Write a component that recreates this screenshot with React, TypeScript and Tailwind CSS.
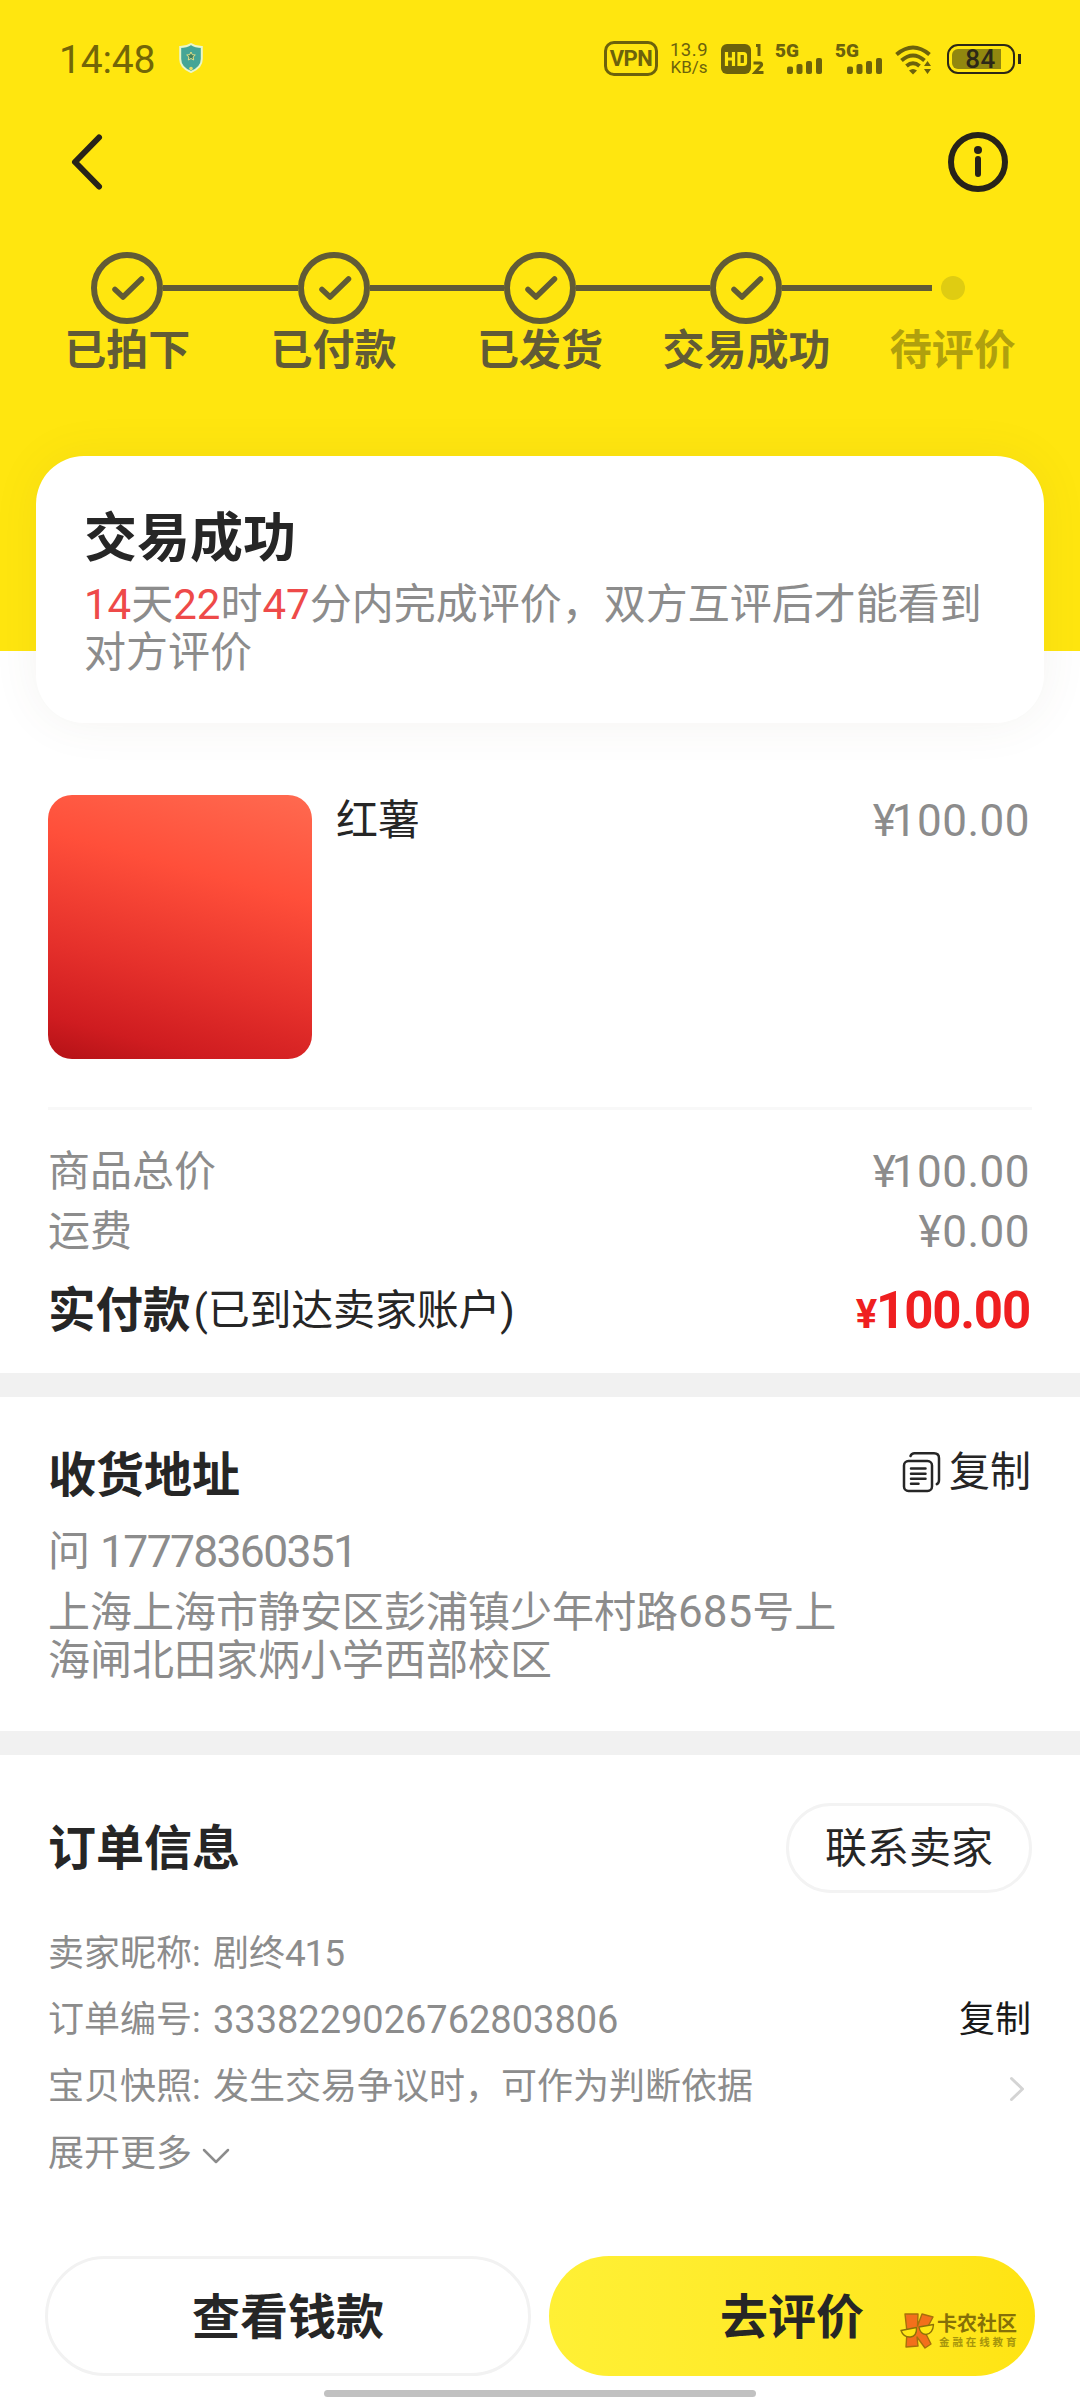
import React from "react";

const FONT = "font-['Roboto','Noto_Sans_CJK_SC',sans-serif]";

function Shield() {
  return (
    <svg className="ml-[22px] h-[30px] w-[24px]" viewBox="0 0 24 30">
      <path
        d="M12 1C9 3 5 4 1.200 4v12c0 6 4.500 10.500 10.800 13 6.300-2.500 10.800-7 10.800-13V4C19 4 15 3 12 1Z"
        fill="#45a596"
        stroke="#e9f6c9"
        strokeWidth="2"
      />
      <path d="m12 9 1.300 2.700 3 .3-2.200 2 .6 3-2.700-1.500L9.300 17l.6-3-2.200-2 3-.3Z" fill="#3f8060" stroke="#e0e08a" strokeWidth="1" />
      <circle cx="12" cy="25.500" r="1.800" fill="#e5dd6a" />
    </svg>
  );
}

function Signal() {
  return (
    <div className="h-[32px] w-[48px]">
      <div className="h-[15px] text-[19px] font-black leading-[16px] text-[#6c620c]">5G</div>
      <svg className="ml-[12px] h-[17px] w-[36px]" viewBox="12 15 36 17" fill="#6c620c">
        <rect x="12" y="23.500" width="6" height="7.500" rx="2" />
        <rect x="21.500" y="21" width="6" height="10" rx="2" />
        <rect x="31" y="18" width="6" height="13" rx="2" />
        <rect x="41" y="15" width="6" height="16" rx="2" />
      </svg>
    </div>
  );
}

function StatusBar() {
  return (
    <div className="flex h-[116px] items-center pl-[59px] pr-[59px]">
      <span className="w-[98px] pt-[4px] text-[39px] leading-[48px] tracking-[-0.200px] text-[#736607]">14:48</span>
      <Shield />
      <div className="ml-auto flex items-center pt-[1px]">
        <div className="flex h-[35px] w-[54px] items-center justify-center rounded-[10px] border-[3px] border-[#6c620c] text-[22px] font-bold tracking-[-0.500px] text-[#6c620c]">
          VPN
        </div>
        <div className="ml-[12px] flex w-[38px] flex-col items-center text-[18.500px] leading-[17px] text-[#6c620c]">
          <span className="tracking-[0.500px]">13.9</span>
          <span className="text-[17px]">KB/s</span>
        </div>
        <svg className="ml-[13px] h-[32px] w-[43px]" viewBox="0 0 43 32" fill="#6c620c">
          <rect x="0" y="1" width="30" height="30" rx="6" />
          <path d="M5.500 9v14M12.500 9v14M5.500 16h7" fill="none" stroke="#ffe60f" strokeWidth="3.200" />
          <path d="M18 10.500h4.500a2 2 0 0 1 2 2v7a2 2 0 0 1-2 2H18Z" fill="none" stroke="#ffe60f" strokeWidth="3.200" />
          <path d="M35 2.500h3V13" fill="none" stroke="#6c620c" strokeWidth="3" />
          <path d="M32.500 20h6.500q2 0 1.500 2.200L34 29.500h8.500" fill="none" stroke="#6c620c" strokeWidth="3" />
        </svg>
        <div className="ml-[11px] flex gap-[12px]">
          <Signal />
          <Signal />
        </div>
        <svg className="ml-[12px] h-[32px] w-[38px]" viewBox="0 0 38 32" fill="none" stroke="#6c620c" strokeWidth="4">
          <path d="M1.500 11.500Q18 -2.500 34.500 11.500" />
          <path d="M6.500 17.500Q18 7.500 29.500 17.500" />
          <path d="M11.500 23Q18 17.500 24.500 23" />
          <path d="M14 27.500q4-3 8 0l-4 4Z" fill="#6c620c" stroke="none" />
          <path d="m32.500 18 3.500 5h-7ZM32.500 31l3.500-5h-7Z" fill="#6c620c" stroke="none" />
        </svg>
        <div className="ml-[14px] flex h-[30px] w-[68px] items-center rounded-[11px] border-[2.500px] border-[#2c2817] p-[3px]">
          <div className="flex h-[20px] w-[49px] items-center justify-center rounded-l-[6px] bg-[#91870f]">
            <span className="ml-[8px] text-[26px] font-medium leading-[20px] tracking-[0.500px] text-[#2c2817]">84</span>
          </div>
        </div>
        <div className="ml-[3px] h-[10px] w-[3px] bg-[#2c2817]" />
      </div>
    </div>
  );
}

function NavBar() {
  return (
    <div className="flex h-[92px] items-center justify-between pl-[66px] pr-[72px]">
      <svg className="h-[60px] w-[42px]" viewBox="0 0 42 60" fill="none" stroke="#272319" strokeWidth="6" strokeLinecap="round" strokeLinejoin="round">
        <path d="M33 5.500 9 30 33 54.500" />
      </svg>
      <svg className="h-[60px] w-[60px]" viewBox="0 0 60 60" fill="none" stroke="#272319" strokeWidth="6">
        <circle cx="30" cy="30" r="27" />
        <circle cx="30" cy="18" r="4" fill="#272319" stroke="none" />
        <path d="M30 27v15" strokeLinecap="round" />
      </svg>
    </div>
  );
}

const steps = ["已拍下", "已付款", "已发货", "交易成功"];

function Steps() {
  return (
    <div className="mx-[24px] mt-[44px] grid grid-cols-5">
      {steps.map((label, i) => (
        <div key={label} className="flex flex-col items-center">
          <div className="flex h-[72px] w-full items-center">
            <div className={i === 0 ? "h-[6px] flex-1" : "h-[6px] flex-1 bg-[#615b36]"} />
            <svg className="h-[72px] w-[72px]" viewBox="0 0 72 72" fill="none" stroke="#615b36" strokeWidth="6">
              <circle cx="36" cy="36" r="33" />
              <path d="m24 37.500 8 7.500 18.500-18" strokeWidth="5.500" strokeLinecap="round" strokeLinejoin="round" />
            </svg>
            <div className="h-[6px] flex-1 bg-[#615b36]" />
          </div>
          <span className="text-[42px] font-bold leading-[53px] text-[#615b36]">{label}</span>
        </div>
      ))}
      <div className="flex flex-col items-center">
        <div className="flex h-[72px] w-full items-center">
          <div className="h-[6px] w-[82px] bg-[#615b36]" />
          <div className="ml-[9px] h-[24px] w-[24px] rounded-full bg-[#dfcc12]" />
        </div>
        <span className="text-[42px] font-bold leading-[53px] text-[#b0a00d]">待评价</span>
      </div>
    </div>
  );
}

function Price({ value }: { value: string }) {
  return (
    <span className="text-[44px] tracking-[0.500px] text-[#8c8c8c]">
      <span className={value.startsWith("1") ? "tracking-[-4px]" : "tracking-[0.500px]"}>¥</span>
      {value}
    </span>
  );
}

function Row({ label, value }: { label: string; value: string }) {
  return (
    <div className="flex h-[60px] items-center justify-between">
      <span className="text-[42px] text-[#8c8c8c]">{label}</span>
      <Price value={value} />
    </div>
  );
}

function CommunityMark() {
  return (
    <div className="absolute right-[18px] top-[56px] flex">
      <svg className="h-[38px] w-[36px]" viewBox="0 0 36 38" stroke="#a8700a" strokeWidth="1.400" strokeLinejoin="round">
        <path d="M6 2h13l-.500 12L23 2l11 3-8 15 6 12-6 4-8-11 1 9-12 1L8 20Z" fill="#f3701b" />
        <path d="M2 18.500 17.500 15.500Q18 24 11.500 25 4.500 25.500 2 18.500ZM20 15l14.500-2.500Q34 21.500 27 22.500 21 22 20 15Z" fill="#ffe714" stroke="#8d7208" />
      </svg>
      <div className="ml-[2px] mt-[2px] w-[80px]">
        <div className="text-[20px] font-bold leading-[20px] text-[#857008]">卡农社区</div>
        <div className="mt-[3px] whitespace-nowrap pl-[2px] text-[10.500px] leading-[11px] tracking-[2.900px] text-[#a6950c]">金融在线教育</div>
      </div>
    </div>
  );
}

export default function App() {
  return (
    <div lang="zh-CN" className={`${FONT} h-[2400px] w-[1080px] overflow-hidden bg-white leading-[48px] text-[#262626]`}>
      <header className="h-[651px] bg-[#ffe60f]">
        <StatusBar />
        <NavBar />
        <Steps />
      </header>

      <section className="relative mx-[36px] -mt-[195px] h-[267px] rounded-[48px] bg-white px-[48px] pt-[51px] shadow-[0_0_48px_rgba(100,80,60,0.070)]">
        <h1 className="text-[53px] font-bold leading-[64px]">交易成功</h1>
        <p className="mt-[10px] whitespace-nowrap text-[42px] leading-[48px] text-[#8c8c8c]">
          <span className="text-[#ee4a49]">14</span>天<span className="text-[#ee4a49]">22</span>时<span className="text-[#ee4a49]">47</span>
          分内完成评价，双方互评后才能看到
          <br />
          对方评价
        </p>
      </section>

      <section className="px-[48px] pt-[72px]">
        <div className="flex h-[264px]">
          <div className="h-[264px] w-[264px] rounded-[24px] bg-[linear-gradient(195deg,#ff6a50_0%,#ff4f3a_32%,#e5302b_65%,#cf1c20_87%,#b31116_100%)]" />
          <span className="ml-[24px] pt-[2px] text-[42px]">红薯</span>
          <span className="ml-auto mr-[2px] pt-[2px]">
            <Price value="100.00" />
          </span>
        </div>
        <div className="mt-[48px] h-[3px] bg-[#f8f8f8]" />
        <div className="mr-[2px] mt-[32px]">
          <Row label="商品总价" value="100.00" />
          <Row label="运费" value="0.00" />
          <div className="mt-[13px] flex h-[72px] items-center justify-between">
            <div className="flex items-center">
              <span className="text-[47.500px] font-bold">实付款</span>
              <span className="ml-[3px] text-[42px] tracking-[-0.200px]">(已到达卖家账户)</span>
            </div>
            <span className="pt-[3px] text-[51px] font-bold tracking-[-1.200px] text-[#ef1f20]">
              <span className="text-[40px]">¥</span>100.00
            </span>
          </div>
        </div>
      </section>

      <div className="mt-[26px] h-[24px] bg-[#f1f1f1]" />

      <section className="h-[334px] px-[48px] pt-[49px]">
        <div className="flex h-[60px] items-center justify-between">
          <h2 className="text-[48px] font-bold">收货地址</h2>
          <div className="mr-[1px] flex items-center pb-[8px]">
            <svg className="h-[42px] w-[40px]" viewBox="0 0 40 42" fill="none" stroke="#262626" strokeWidth="2.500" strokeLinecap="round">
              <rect x="2" y="10" width="28" height="30" rx="4.500" />
              <path d="M8.500 5Q9.500 2.300 12.500 2.300H32q5 0 5 5V29q0 3-2.200 4.200" />
              <path d="M9 17.500h14.500M9 22.700h14.500M9 27.800h14.500M9 32.800h7.500" />
            </svg>
            <span className="ml-[7px] text-[41px]">复制</span>
          </div>
        </div>
        <div className="mt-[22px] flex items-center text-[#8c8c8c]">
          <span className="text-[42px]">问</span>
          <span className="ml-[10px] text-[44.500px] tracking-[-1.700px]">17778360351</span>
        </div>
        <p className="mt-[12px] whitespace-nowrap text-[42px] text-[#8c8c8c]">
          上海上海市静安区彭浦镇少年村路<span className="text-[44px]">685</span>号上
          <br />
          海闸北田家炳小学西部校区
        </p>
      </section>

      <div className="h-[24px] bg-[#f1f1f1]" />

      <section className="h-[501px] px-[48px] pt-[48px]">
        <div className="flex h-[90px] items-center justify-between">
          <h2 className="pt-[2px] text-[48px] font-bold">订单信息</h2>
          <button className="h-[90px] w-[246px] rounded-full border-[3px] border-[#f3f3f3] pt-[2px] text-[42px]">联系卖家</button>
        </div>
        <div className="mt-[27px] text-[36px] text-[#8c8c8c]">
          <div className="flex h-[67px] items-center">
            <span className="w-[165px]">卖家昵称:</span>
            <span>
              剧终<span className="text-[37px] tracking-[-1.200px]">415</span>
            </span>
          </div>
          <div className="flex h-[66px] items-center">
            <span className="w-[165px]">订单编号:</span>
            <span className="text-[38px] tracking-[-0.020px]">3338229026762803806</span>
            <span className="ml-auto mr-[1px] text-[#1a1a1a]">复制</span>
          </div>
          <div className="flex h-[67px] items-center">
            <span className="w-[165px]">宝贝快照:</span>
            <span>发生交易争议时，可作为判断依据</span>
            <svg className="ml-auto mr-[6px] mt-[5px] h-[28px] w-[18px]" viewBox="0 0 18 28" fill="none" stroke="#d4d4d4" strokeWidth="3" strokeLinecap="round" strokeLinejoin="round">
              <path d="m3.500 3.500 11 10.500-11 10.500" />
            </svg>
          </div>
          <div className="flex h-[67px] items-center">
            <span>展开更多</span>
            <svg className="ml-[9px] mt-[5px] h-[18px] w-[30px]" viewBox="0 0 30 18" fill="none" stroke="#8c8c8c" strokeWidth="2.500" strokeLinecap="round" strokeLinejoin="round">
              <path d="m3 3 12 12L27 3" />
            </svg>
          </div>
        </div>
      </section>

      <footer className="flex gap-[18px] px-[45px]">
        <button className="h-[120px] w-[486px] rounded-full border-[3px] border-[#f2f2f2] pt-[3px] text-[48px] font-bold">查看钱款</button>
        <button className="relative h-[120px] w-[486px] rounded-full bg-gradient-to-r from-[#fff035] to-[#ffe412] pt-[3px] text-[48px] font-bold">
          去评价
          <CommunityMark />
        </button>
      </footer>
      <div className="mx-auto mt-[14px] h-[7px] w-[432px] rounded-full bg-[#c1c1c1]" />
    </div>
  );
}
